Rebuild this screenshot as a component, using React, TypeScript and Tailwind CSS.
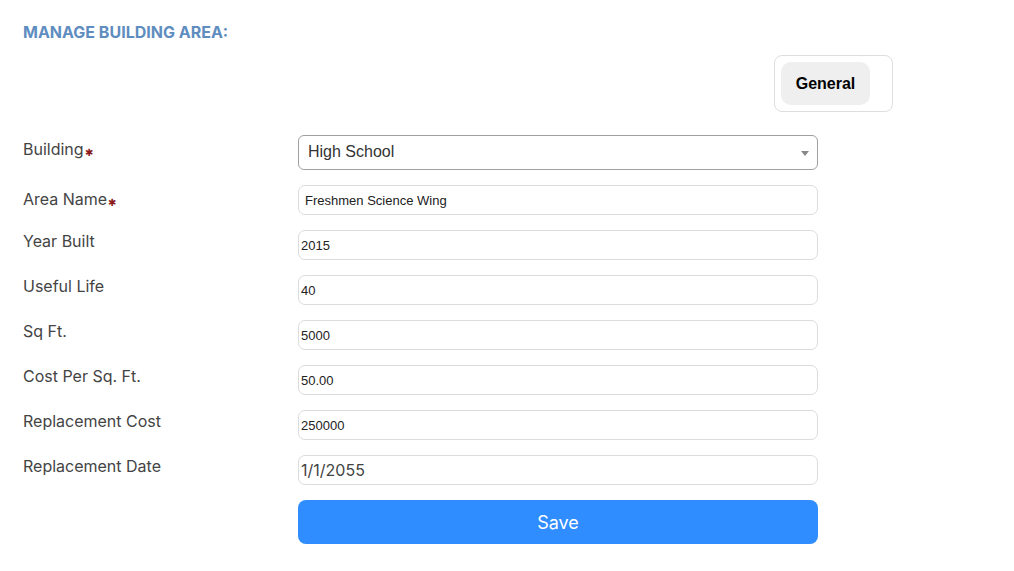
import { useState } from 'react';

const inter = { fontFamily: 'Inter, "Noto Sans", sans-serif' };

function Req() {
  return <span className="ml-px align-[-1px] text-[10px] leading-none text-[#8b1a1a]">✱</span>;
}

function Field({
  label,
  required,
  labelClass = '',
  children,
}: {
  label: string;
  required?: boolean;
  labelClass?: string;
  children: React.ReactNode;
}) {
  return (
    <div className="flex items-start">
      <div className={`w-[275px] shrink-0 text-[16px] leading-6 text-[#444] ${labelClass}`}>
        {label}
        {required && <Req />}
      </div>
      <div className="w-[520px]">{children}</div>
    </div>
  );
}

const inputCls =
  "block h-[30px] w-full rounded-[7px] border border-[#dcdcdc] bg-white px-[2px] text-[13px] text-[#222] outline-none font-['Liberation_Sans',Arial,sans-serif]";

export default function App() {
  const [values, setValues] = useState({
    area: 'Freshmen Science Wing',
    year: '2015',
    life: '40',
    sqft: '5000',
    cost: '50.00',
    repl: '250000',
    date: '1/1/2055',
  });
  const set = (k: keyof typeof values) => (e: React.ChangeEvent<HTMLInputElement>) =>
    setValues({ ...values, [k]: e.target.value });

  return (
    <div className="min-h-screen bg-white px-[23px] pt-[23px]" style={inter}>
      <h1 className="text-[16px] font-bold leading-[18px] text-[#5f8dbf]">MANAGE BUILDING AREA:</h1>

      <div className="mt-[14px] flex">
        <div className="ml-[751px] w-[119px] rounded-[8px] border border-[#dedede] p-[6px]">
          <button className="h-[43px] w-[89px] rounded-[10px] bg-[#efefef] text-[16px] font-bold text-black font-['Liberation_Sans',Arial,sans-serif]">
            General
          </button>
        </div>
      </div>

      <div className="mt-[23px] flex flex-col gap-[15px]">
        <Field label="Building" required labelClass="pt-[2px]">
          <div className="relative h-[35px] rounded-[6px] border border-[#a0a0a0] bg-white">
            <div className="px-[9px] text-[16px] leading-[31px] text-[#333] font-['Liberation_Sans',Arial,sans-serif]">
              High School
            </div>
            <span className="absolute right-[8px] top-[15px] h-0 w-0 border-x-[4px] border-t-[5px] border-x-transparent border-t-[#888]" />
          </div>
        </Field>
        <Field label="Area Name" required labelClass="pt-[2px]">
          <input className={`${inputCls} px-[6px]`} value={values.area} onChange={set('area')} />
        </Field>
        <Field label="Year Built" labelClass="-mt-px">
          <input className={inputCls} value={values.year} onChange={set('year')} />
        </Field>
        <Field label="Useful Life" labelClass="-mt-px">
          <input className={inputCls} value={values.life} onChange={set('life')} />
        </Field>
        <Field label="Sq Ft." labelClass="-mt-px">
          <input className={inputCls} value={values.sqft} onChange={set('sqft')} />
        </Field>
        <Field label="Cost Per Sq. Ft." labelClass="-mt-px">
          <input className={inputCls} value={values.cost} onChange={set('cost')} />
        </Field>
        <Field label="Replacement Cost" labelClass="-mt-px">
          <input className={inputCls} value={values.repl} onChange={set('repl')} />
        </Field>
        <Field label="Replacement Date" labelClass="-mt-px">
          <input
            className="block h-[30px] w-full rounded-[7px] border border-[#dcdcdc] bg-white px-[2px] text-[16px] text-[#444] outline-none"
            style={inter}
            value={values.date}
            onChange={set('date')}
          />
        </Field>
        <div className="flex">
          <div className="w-[275px] shrink-0" />
          <button className="h-[44px] w-[520px] rounded-[8px] bg-[#2f8dff] text-[18px] text-white">Save</button>
        </div>
      </div>
    </div>
  );
}
